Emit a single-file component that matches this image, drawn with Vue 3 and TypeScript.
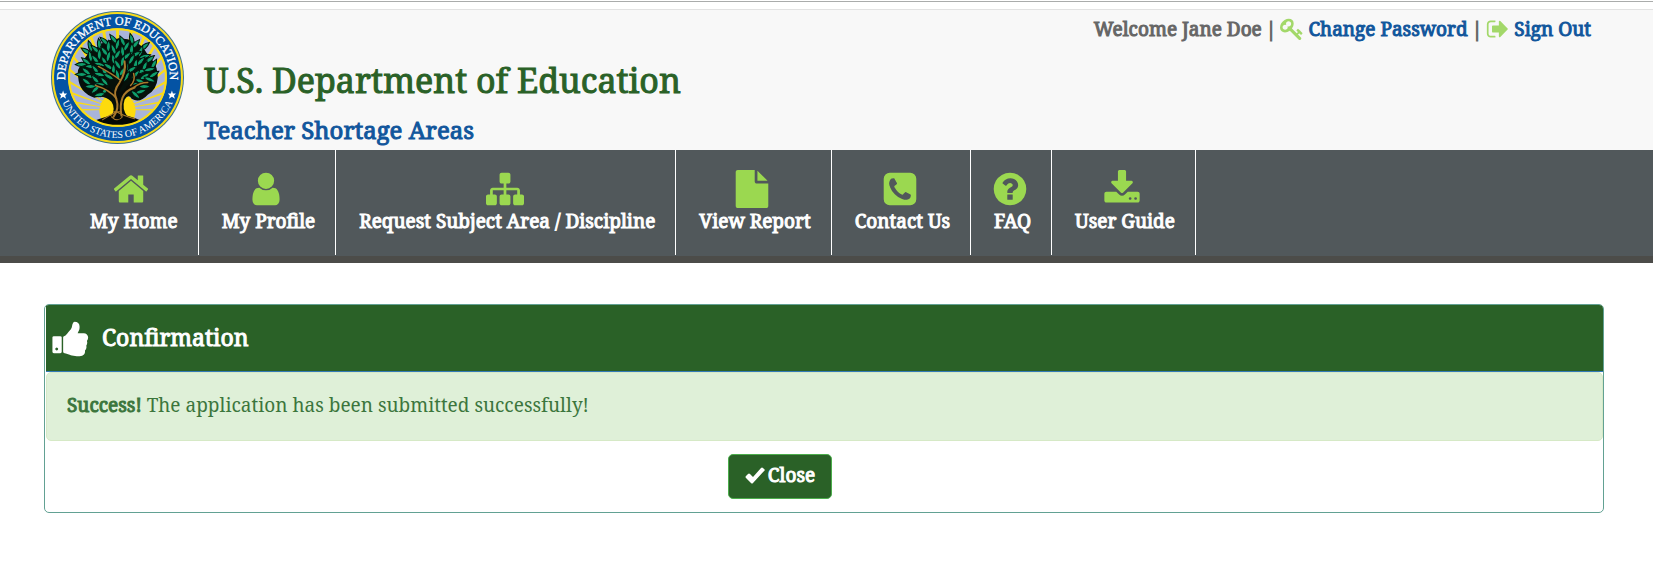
<script setup lang="ts">
interface NavItem {
  label: string
  path: string
}

const navItems: NavItem[] = [
  {
    label: 'My Home',
    path: 'M1472 992v480q0 26-19 45t-45 19h-384v-384h-256v384h-384q-26 0-45-19t-19-45v-480q0-1 .5-3t.5-3l575-474 575 474q1 2 1 6zm223-69l-62 74q-8 9-21 11h-3q-13 0-21-7l-692-577-692 577q-12 8-24 7-13-2-21-11l-62-74q-8-10-7-23.5t11-21.5l719-599q32-26 76-26t76 26l244 204v-195q0-14 9-23t23-9h192q14 0 23 9t9 23v408l219 182q10 8 11 21.5t-7 23.5z',
  },
  {
    label: 'My Profile',
    path: 'M1536 1399q0 109-62.5 187t-150.5 78h-854q-88 0-150.5-78t-62.5-187q0-85 8.5-160.5t31.5-152 58.5-131 94-89 134.5-34.5q131 128 313 128t313-128q76 0 134.5 34.5t94 89 58.5 131 31.5 152 8.5 160.5zm-256-887q0 159-112.5 271.5t-271.5 112.5-271.5-112.5-112.5-271.5 112.5-271.5 271.5-112.5 271.5 112.5 112.5 271.5z',
  },
  {
    label: 'Request Subject Area / Discipline',
    path: 'M1792 1248v320q0 40-28 68t-68 28h-320q-40 0-68-28t-28-68v-320q0-40 28-68t68-28h96v-192h-512v192h96q40 0 68 28t28 68v320q0 40-28 68t-68 28h-320q-40 0-68-28t-28-68v-320q0-40 28-68t68-28h96v-192h-512v192h96q40 0 68 28t28 68v320q0 40-28 68t-68 28h-320q-40 0-68-28t-28-68v-320q0-40 28-68t68-28h96v-192q0-52 38-90t90-38h512v-192h-96q-40 0-68-28t-28-68v-320q0-40 28-68t68-28h320q40 0 68 28t28 68v320q0 40-28 68t-68 28h-96v192h512q52 0 90 38t38 90v192h96q40 0 68 28t28 68z',
  },
  {
    label: 'View Report',
    path: 'M1152 512v-472q22 14 36 28l408 408q14 14 28 36h-472zm-128 32q0 40 28 68t68 28h544v1056q0 40-28 68t-68 28h-1344q-40 0-68-28t-28-68v-1600q0-40 28-68t68-28h800v544z',
  },
  {
    label: 'Contact Us',
    path: 'M1408 1193q0-11-2-16t-18-16.5-40.5-25-47.5-26.5-45.5-25-28.5-15q-5-3-19-13t-25-15-21-5q-15 0-36.5 20.5t-39.5 45-38.5 45-33.5 20.5q-7 0-16.5-3.5t-15.5-6.5-17-9.5-14-8.5q-99-55-170-126.5t-127-170.5q-2-3-8.5-14t-9.5-17-6.5-15.5-3.5-16.5q0-13 20.5-33.5t45-38.5 45-39.5 20.5-36.5q0-10-5-21t-15-25-13-19q-3-6-15-28.5t-25-45.5-26.5-47.5-25-40.5-16.5-18-16-2q-48 0-101 22-46 21-80 94.5t-34 130.5q0 16 2.5 34t5 30.5 9 33 10 29.5 12.5 33 11 30q60 164 216.5 320.5t320.5 216.5q6 2 30 11t33 12.5 29.5 10 33 9 30.5 5 34 2.5q57 0 130.5-34t94.5-80q22-53 22-101zm256-777v960q0 119-84.5 203.5t-203.5 84.5h-960q-119 0-203.5-84.5t-84.5-203.5v-960q0-119 84.5-203.5t203.5-84.5h960q119 0 203.5 84.5t84.5 203.5z',
  },
  {
    label: 'FAQ',
    path: 'M1024 1376v-192q0-14-9-23t-23-9h-192q-14 0-23 9t-9 23v192q0 14 9 23t23 9h192q14 0 23-9t9-23zm256-672q0-88-55.5-163t-138.5-116-170-41q-243 0-371 213-15 24 8 42l132 100q7 6 19 6 16 0 25-12 53-68 86-92 34-24 86-24 48 0 85.5 26t37.5 59q0 38-20 61t-68 45q-63 28-115.5 86.5t-52.5 125.5v36q0 14 9 23t23 9h192q14 0 23-9t9-23q0-19 21.5-49.5t54.5-49.5q32-18 49-28.5t46-35 44.5-48 28-60.5 12.5-81zm384 192q0 209-103 385.5t-279.5 279.5-385.5 103-385.5-103-279.5-279.5-103-385.5 103-385.5 279.5-279.5 385.5-103 385.5 103 279.5 279.5 103 385.5z',
  },
  {
    label: 'User Guide',
    path: 'M1344 1344q0-26-19-45t-45-19-45 19-19 45 19 45 45 19 45-19 19-45zm256 0q0-26-19-45t-45-19-45 19-19 45 19 45 45 19 45-19 19-45zm128-224v320q0 40-28 68t-68 28h-1472q-40 0-68-28t-28-68v-320q0-40 28-68t68-28h465l135 136q58 56 136 56t136-56l136-136h464q40 0 68 28t28 68zm-325-569q17 41-14 70l-448 448q-18 19-45 19t-45-19l-448-448q-31-29-14-70 17-39 59-39h256v-448q0-26 19-45t45-19h256q26 0 45 19t19 45v448h256q42 0 59 39z',
  },
]

// Sun rays spreading from the foot of the tree.
const rays = Array.from({ length: 19 }, (_, i) => {
  const a = (180 + i * 10 - 1.1) * Math.PI / 180
  const b = (180 + i * 10 + 1.1) * Math.PI / 180
  const p = (t: number) => `${(66 + 100 * Math.cos(t)).toFixed(1)} ${(98 + 100 * Math.sin(t)).toFixed(1)}`
  return `M66 98L${p(a)}L${p(b)}z`
}).join('')

// Leaves fill the crown in staggered rows and point away from its middle;
// the space around the trunk stays free.
const leaves: string[] = []
for (let row = 0; row < 12; row++) {
  for (let col = 0; col < 10; col++) {
    const x = 26 + col * 9 + (row % 2) * 4
    const y = 28 + row * 5 + (col % 2) * 2
    const dx = (x - 66) / 39
    const dy = (y - 58) / 33
    const inCrown = dx * dx + dy * dy < 1
    const nearTrunk = y > 66 && Math.abs(x - 68) < 13
    if (inCrown && !nearTrunk) {
      const out = Math.atan2(y - 74, x - 66) * 180 / Math.PI
      const turn = ((row * 3 + col * 5) % 5 - 2) * 16
      leaves.push(`translate(${x} ${y}) rotate(${Math.round(out + turn)})`)
    }
  }
}
</script>

<template>
  <div class="page">
    <header class="masthead">
      <svg class="seal" viewBox="0 0 132 132" role="img" aria-label="Department of Education seal">
        <defs>
          <clipPath id="seal-inner"><circle cx="66" cy="66" r="48" /></clipPath>
          <path id="arc-top" d="M15 76A52 52 0 1 1 117 76" />
          <path id="arc-bottom" d="M6 66A60 60 0 0 0 126 66" />
        </defs>
        <circle cx="66" cy="66" r="66" fill="#3f7390" />
        <circle cx="66" cy="66" r="65" fill="#f8dc1c" />
        <circle cx="66" cy="66" r="63" fill="#0453a4" />
        <circle cx="66" cy="66" r="49" fill="#fbdc14" />
        <g clip-path="url(#seal-inner)">
          <circle cx="66" cy="66" r="48" fill="#a9b4da" />
          <path :d="rays" fill="#fbdc14" />
          <circle cx="66" cy="99" r="18" fill="#fddb0e" />
          <path d="M40 110Q48 107 58 104Q66 102 76 104Q84 106 92 110L86 116H46z" fill="#050805" />
        </g>
        <circle cx="66" cy="66" r="48" fill="none" stroke="#fbdc14" stroke-width="2" />
        <path d="M59 106Q65 97 60 90Q53 83 43 86Q28 81 27 66Q25 57 31 53Q35 40 47 35Q58 25 76 28Q89 30 97 45Q106 53 106 66Q105 78 96 83Q88 92 80 87Q77 82 73 88Q70 97 76 105z" fill="#06100a" />
        <path v-for="(leaf, i) in leaves" :key="i" :transform="leaf" d="M-6 0Q-1-4 6 0Q-1 4-6 0z" fill="#0f9e6c" stroke="#04150d" stroke-width="1" />
        <g fill="none" stroke-linecap="round">
          <g stroke="#080a05" stroke-width="3">
            <path d="M64 105Q70 96 66 87Q63 80 69 72" stroke-width="5" />
            <path d="M66 86Q58 77 46 74M69 72Q76 62 74 51M62 63Q56 58 47 55M70 82Q78 75 94 71M76 76Q84 72 82 62" />
          </g>
          <g stroke="#a9792c" stroke-width="2">
            <path d="M62 105Q68 97 65 88Q61 80 68 71Q75 60 73 50M70 104Q68 94 71 86Q74 79 83 76" />
            <path d="M65 87Q58 78 44 74M82 76Q88 71 96 71M79 74Q84 69 82 62M68 68Q60 62 47 55" stroke-width="1.500" />
          </g>
          <path d="M51 108Q59 103 65 100Q72 104 83 107M62 100h8M60 105Q66 111 71 105" stroke="#a9792c" stroke-width="1" />
        </g>
        <text class="seal-text seal-text-top"><textPath href="#arc-top" startOffset="50%">DEPARTMENT OF EDUCATION</textPath></text>
        <text class="seal-text seal-text-bottom"><textPath href="#arc-bottom" startOffset="50%">UNITED STATES OF AMERICA</textPath></text>
        <g fill="#fff">
          <path d="M12 79l1 3h3l-2 2 1 3-3-2-3 2 1-3-2-2h3z" />
          <path d="M120 79l1 3h3l-2 2 1 3-3-2-3 2 1-3-2-2h3z" />
        </g>
      </svg>
      <div class="titles">
        <h1>U.S. Department of Education</h1>
        <h2>Teacher Shortage Areas</h2>
      </div>
      <div class="account">
        <span>Welcome Jane Doe</span>
        <span>|</span>
        <a href="#password">
          <svg viewBox="0 0 1792 1792" aria-hidden="true"><path d="M832 512q0-80-56-136t-136-56-136 56-56 136q0 42 19 83-41-19-83-19-80 0-136 56t-56 136 56 136 136 56 136-56 56-136q0-42-19-83 41 19 83 19 80 0 136-56t56-136zm851 704q0 17-49 66t-66 49q-9 0-28.5-16t-36.5-33-38.5-40-24.5-26l-96 96 220 220q28 28 28 68 0 42-39 81t-81 39q-40 0-68-28l-671-671q-176 131-365 131-163 0-265.5-102.5t-102.5-265.5q0-160 95-313t248-248 313-95q163 0 265.5 102.5t102.5 265.5q0 189-131 365l355 355 96-96q-3-3-26-24.5t-40-38.5-33-36.5-16-28.5q0-17 49-66t66-49q13 0 23 10 6 6 46 44.5t82 79.5 86.5 86 73 78 28.5 41z" /></svg>
          <span>Change Password</span>
        </a>
        <span>|</span>
        <a href="#signout">
          <svg viewBox="0 0 1792 1792" aria-hidden="true"><path d="M704 1440q0 4 1 20t.5 26.5-3 23.5-10 19.5-20.5 6.5h-320q-119 0-203.5-84.5t-84.5-203.5v-704q0-119 84.5-203.5t203.5-84.5h320q13 0 22.5 9.5t9.5 22.5q0 4 1 20t.5 26.5-3 23.5-10 19.5-20.5 6.5h-320q-66 0-113 47t-47 113v704q0 66 47 113t113 47h312l11.5 1 11.5 3 8 5.5 7 9 2 13.5zm928-544q0 26-19 45l-544 544q-19 19-45 19t-45-19-19-45v-288h-448q-26 0-45-19t-19-45v-384q0-26 19-45t45-19h448v-288q0-26 19-45t45-19 45 19l544 544q19 19 19 45z" /></svg>
          <span>Sign Out</span>
        </a>
      </div>
    </header>

    <nav class="menu" aria-label="Main">
      <a v-for="item in navItems" :key="item.label" href="#" class="menu-item">
        <svg viewBox="0 0 1792 1792" aria-hidden="true"><path :d="item.path" /></svg>
        <span>{{ item.label }}</span>
      </a>
    </nav>

    <main class="content">
      <section class="panel">
        <div class="panel-head">
          <svg viewBox="0 0 1792 1792" aria-hidden="true"><path d="M320 1344q0-26-19-45t-45-19q-27 0-45.500 19t-18.500 45q0 27 18.500 45.500t45.500 18.500q26 0 45-18.500t19-45.500zm160-512v640q0 26-19 45t-45 19h-288q-26 0-45-19t-19-45v-640q0-26 19-45t45-19h288q26 0 45 19t19 45zm1184 0q0 86-55 149 15 44 15 76 3 76-43 137 17 56 0 117-15 57-54 94 9 112-49 181-64 76-197 78h-129q-66 0-144-15.500t-121.500-29-120.500-39.500q-123-43-158-44-26-1-45-19.500t-19-44.500v-641q0-25 18-43.500t43-20.500q24-2 76-59t101-121q68-87 101-120 18-18 31-48t17.500-48.500 13.500-60.500q7-39 12.500-61t19.500-52 34-50q19-19 45-19 46 0 82.500 10.500t60 26 40 40.500 24 45 12 50 5 45 .5 39q0 38-9.500 76t-19 60-27.500 56q-3 6-10 18t-11 22-8 24h277q78 0 135 57t57 135z" /></svg>
          <h3>Confirmation</h3>
        </div>
        <p class="alert" role="status"><strong>Success!</strong> The application has been submitted successfully!</p>
        <div class="actions">
          <button type="button" class="close">
            <svg viewBox="0 0 20 17" aria-hidden="true"><path d="M1 9L3 7Q4 6 5 7L8 10L16 1Q17 0 18 1L20 3L8 16Q7 17 6 16L1 11Q0 10 1 9z" /></svg>
            <span>Close</span>
          </button>
        </div>
      </section>
    </main>
  </div>
</template>

<style>
body {
  margin: 0;
  background: #fff;
}
</style>

<style scoped>
.page {
  font-family: "Noto Serif", "DejaVu Serif Condensed", "Liberation Serif", serif;
  font-size: 19px;
  border-top: 1px solid #fff;
}

.page::before {
  content: "";
  display: block;
  height: 7px;
  border-top: 1px solid #aaacab;
}

.masthead {
  display: flex;
  box-sizing: border-box;
  min-height: 141px;
  padding: 0 62px 0 51px;
  background: #f8f8f8;
  border-top: 1px solid #e2e2e2;
}

.seal {
  flex: none;
  width: 133px;
  height: 133px;
  margin-top: 1px;
}

.seal-text {
  fill: #fff;
  font-family: "Liberation Serif", serif;
  text-anchor: middle;
}

.seal-text-top {
  font-size: 12px;
  stroke: #fff;
  stroke-width: .3;
}

.seal-text-bottom {
  font-size: 10px;
}

.titles {
  margin: 45px 0 0 20px;
}

h1, h2, h3 {
  margin: 0;
  font-weight: 400;
}

h1 {
  color: #2a6127;
  font-size: 34px;
  line-height: 50px;
  -webkit-text-stroke: 1px;
}

h2 {
  color: #11569c;
  font-size: 24px;
  line-height: 36px;
  margin-top: 7px;
  -webkit-text-stroke: 1px;
}

.account {
  display: flex;
  align-items: center;
  align-self: flex-start;
  gap: 4px;
  margin: 6px 0 0 auto;
  color: #666;
  line-height: 26px;
  -webkit-text-stroke: 1px;
}

.account a {
  display: flex;
  align-items: center;
  gap: 4px;
  color: #11569c;
  text-decoration: none;
}

.account svg {
  width: 24px;
  height: 24px;
  fill: #a3d86a;
}

.menu {
  display: flex;
  padding-left: 67px;
  background: #51585b;
  border-bottom: 7px solid #4c4c49;
}

.menu-item {
  display: flex;
  flex-direction: column;
  align-items: center;
  box-sizing: border-box;
  height: 105px;
  margin-bottom: 1px;
  padding: 20px 20px 0 23px;
  border-right: 1px solid #fff;
  color: #fff;
  line-height: 26px;
  text-decoration: none;
  -webkit-text-stroke: 1px;
}

.menu-item svg {
  display: block;
  width: 38px;
  height: 38px;
  margin-left: -5px;
  fill: #9bd850;
}

.content {
  padding: 41px 49px 0 44px;
}

.panel {
  border: 1px solid #62a193;
  border-radius: 5px;
  overflow: hidden;
}

.panel-head {
  display: flex;
  align-items: center;
  gap: 11px;
  height: 66px;
  margin-left: 1px;
  padding-left: 5px;
  background: #2a6127;
  border-bottom: 1px solid #337ab7;
  color: #fff;
}

.panel-head svg {
  width: 40px;
  height: 40px;
  margin-top: 2px;
  fill: #fff;
}

h3 {
  margin-bottom: 2px;
  font-size: 23px;
  line-height: 34px;
  -webkit-text-stroke: 1px;
}

.alert {
  margin: 0 0 0 1px;
  padding: 19px 20px 21px;
  background: #dff0d8;
  border: 1px solid #d6e9c6;
  border-radius: 5px;
  color: #3c763d;
  line-height: 27px;
}

.alert strong {
  font-weight: 400;
  -webkit-text-stroke: 1px;
}

.actions {
  display: flex;
  justify-content: center;
  padding: 13px 88px 13px 0;
}

.close {
  display: flex;
  align-items: center;
  gap: 3px;
  padding: 7px 16px 9px;
  background: #2a6127;
  border: 1px solid #4cae4c;
  border-radius: 5px;
  color: #fff;
  font-family: inherit;
  font-size: 19px;
  line-height: 27px;
  cursor: pointer;
  -webkit-text-stroke: 1px;
}

.close svg {
  width: 20px;
  height: 17px;
  fill: #fff;
}
</style>
